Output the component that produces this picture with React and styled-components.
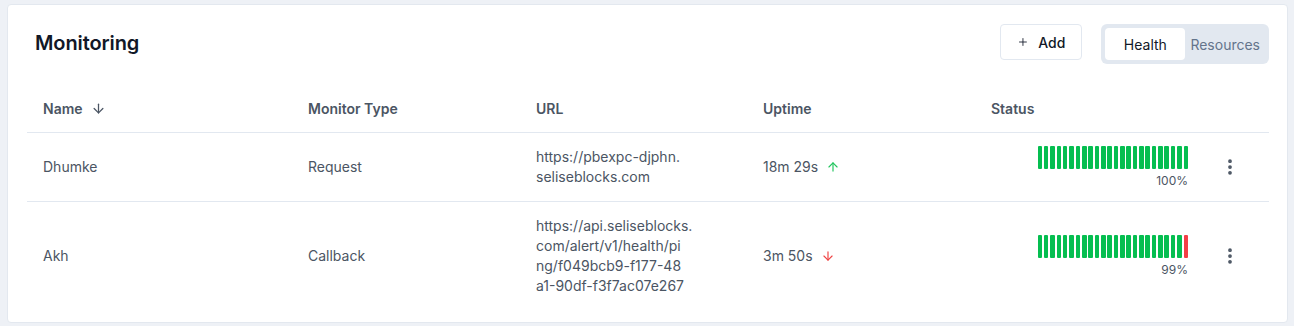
import React from "react";
import styled, { createGlobalStyle } from "styled-components";
import { ArrowDown, ArrowUp, Plus, EllipsisVertical } from "lucide-react";

const Global = createGlobalStyle`
  html, body { margin: 0; padding: 0; background: #eef1f6; }
  body { font-family: Inter, "Noto Sans", sans-serif; color: #374151; }
  * { box-sizing: border-box; }
`;

const Page = styled.div`
  padding: 4px 6px 4px 7px;
`;

const Card = styled.section`
  background: #fff;
  border: 1px solid #e3e8ef;
  border-radius: 4px;
  padding: 19px 18px 12px 19px;
`;

const Header = styled.div`
  display: flex;
  align-items: flex-start;
  justify-content: space-between;
  height: 40px;
  padding-left: 8px;
`;

const Title = styled.h1`
  margin: 0;
  font-size: 20px;
  line-height: 38px;
  font-weight: 600;
  color: #111827;
  letter-spacing: -0.1px;
`;

const Actions = styled.div`
  display: flex;
  align-items: flex-start;
  gap: 19px;
`;

const AddButton = styled.button`
  display: flex;
  align-items: center;
  gap: 9px;
  height: 36px;
  width: 82px;
  padding: 0 16px;
  background: #fff;
  border: 1px solid #e2e8f0;
  border-radius: 4px;
  font-family: inherit;
  font-size: 14px;
  font-weight: 500;
  color: #111827;
`;

const Tabs = styled.div`
  display: flex;
  align-items: center;
  height: 40px;
  padding: 4px;
  background: #e2e8f0;
  border-radius: 6px;
`;

const Tab = styled.button`
  height: 32px;
  padding: 0 ${(p) => (p.$active ? "18px" : "5px")};
  min-width: ${(p) => (p.$active ? "80px" : "0")};
  border: none;
  border-radius: 4px;
  background: ${(p) => (p.$active ? "#fff" : "transparent")};
  color: ${(p) => (p.$active ? "#111827" : "#64748b")};
  font-family: inherit;
  font-size: 14px;
  font-weight: 400;
`;

const cols = "265px 228px 227px 228px 229px 1fr";

const HeadRow = styled.div`
  display: grid;
  grid-template-columns: ${cols};
  align-items: center;
  height: 49px;
  margin-top: 20px;
  border-bottom: 1px solid #e2e8f0;
`;

const HeadCell = styled.div`
  display: flex;
  align-items: center;
  gap: 8px;
  padding: 0 16px;
  font-size: 14px;
  font-weight: 600;
  color: #4b5563;
`;

const Row = styled.div`
  display: grid;
  grid-template-columns: ${cols};
  align-items: center;
  border-bottom: ${(p) => (p.$last ? "none" : "1px solid #e2e8f0")};
`;

const Cell = styled.div`
  display: flex;
  align-items: center;
  gap: 8px;
  padding: 14px 16px;
  font-size: 14px;
  line-height: 20px;
  color: #4b5563;
`;

const UrlCell = styled(Cell)`
  display: block;
`;

const UrlLine = styled.div`
  white-space: nowrap;
`;

const StatusCell = styled(Cell)`
  flex-direction: column;
  align-items: flex-end;
  gap: 5px;
  padding: 12px 16px;
`;

const Bars = styled.div`
  display: flex;
  gap: 1.85px;
  height: 23px;
`;

const Bar = styled.span`
  width: 4.5px;
  height: 100%;
  border-radius: 1px;
  background: ${(p) => (p.$down ? "#f43f46" : "#05be50")};
`;

const Percent = styled.span`
  font-size: 12px;
  line-height: 14px;
  color: #4b5563;
`;

const MenuCell = styled.div`
  display: flex;
  align-items: center;
  padding: 0 0 0 16px;
  color: #4b5563;
`;

const rows = [
  {
    name: "Dhumke",
    type: "Request",
    url: ["https://pbexpc-djphn.", "seliseblocks.com"],
    uptime: "18m 29s",
    up: true,
    bars: Array(24).fill(false),
    pct: "100%",
  },
  {
    name: "Akh",
    type: "Callback",
    url: [
      "https://api.seliseblocks.",
      "com/alert/v1/health/pi",
      "ng/f049bcb9-f177-48",
      "a1-90df-f3f7ac07e267",
    ],
    uptime: "3m 50s",
    up: false,
    bars: [...Array(23).fill(false), true],
    pct: "99%",
  },
];

export default function App() {
  return (
    <Page>
      <Global />
      <Card>
        <Header>
          <Title>Monitoring</Title>
          <Actions>
            <AddButton>
              <Plus size={18} strokeWidth={1.75} />
              Add
            </AddButton>
            <Tabs>
              <Tab $active>Health</Tab>
              <Tab>Resources</Tab>
            </Tabs>
          </Actions>
        </Header>
        <HeadRow>
          <HeadCell>
            Name <ArrowDown size={15} strokeWidth={2} />
          </HeadCell>
          <HeadCell>Monitor Type</HeadCell>
          <HeadCell>URL</HeadCell>
          <HeadCell>Uptime</HeadCell>
          <HeadCell>Status</HeadCell>
          <HeadCell />
        </HeadRow>
        {rows.map((r, i) => (
          <Row key={r.name} $last={i === rows.length - 1}>
            <Cell>{r.name}</Cell>
            <Cell>{r.type}</Cell>
            <UrlCell>
              {r.url.map((l) => (
                <UrlLine key={l}>{l}</UrlLine>
              ))}
            </UrlCell>
            <Cell>
              {r.uptime}
              {r.up ? (
                <ArrowUp size={14} color="#22c55e" strokeWidth={2} />
              ) : (
                <ArrowDown size={14} color="#ef4444" strokeWidth={2} />
              )}
            </Cell>
            <StatusCell>
              <Bars>
                {r.bars.map((d, j) => (
                  <Bar key={j} $down={d} />
                ))}
              </Bars>
              <Percent>{r.pct}</Percent>
            </StatusCell>
            <MenuCell>
              <EllipsisVertical size={20} strokeWidth={2.5} />
            </MenuCell>
          </Row>
        ))}
      </Card>
    </Page>
  );
}
